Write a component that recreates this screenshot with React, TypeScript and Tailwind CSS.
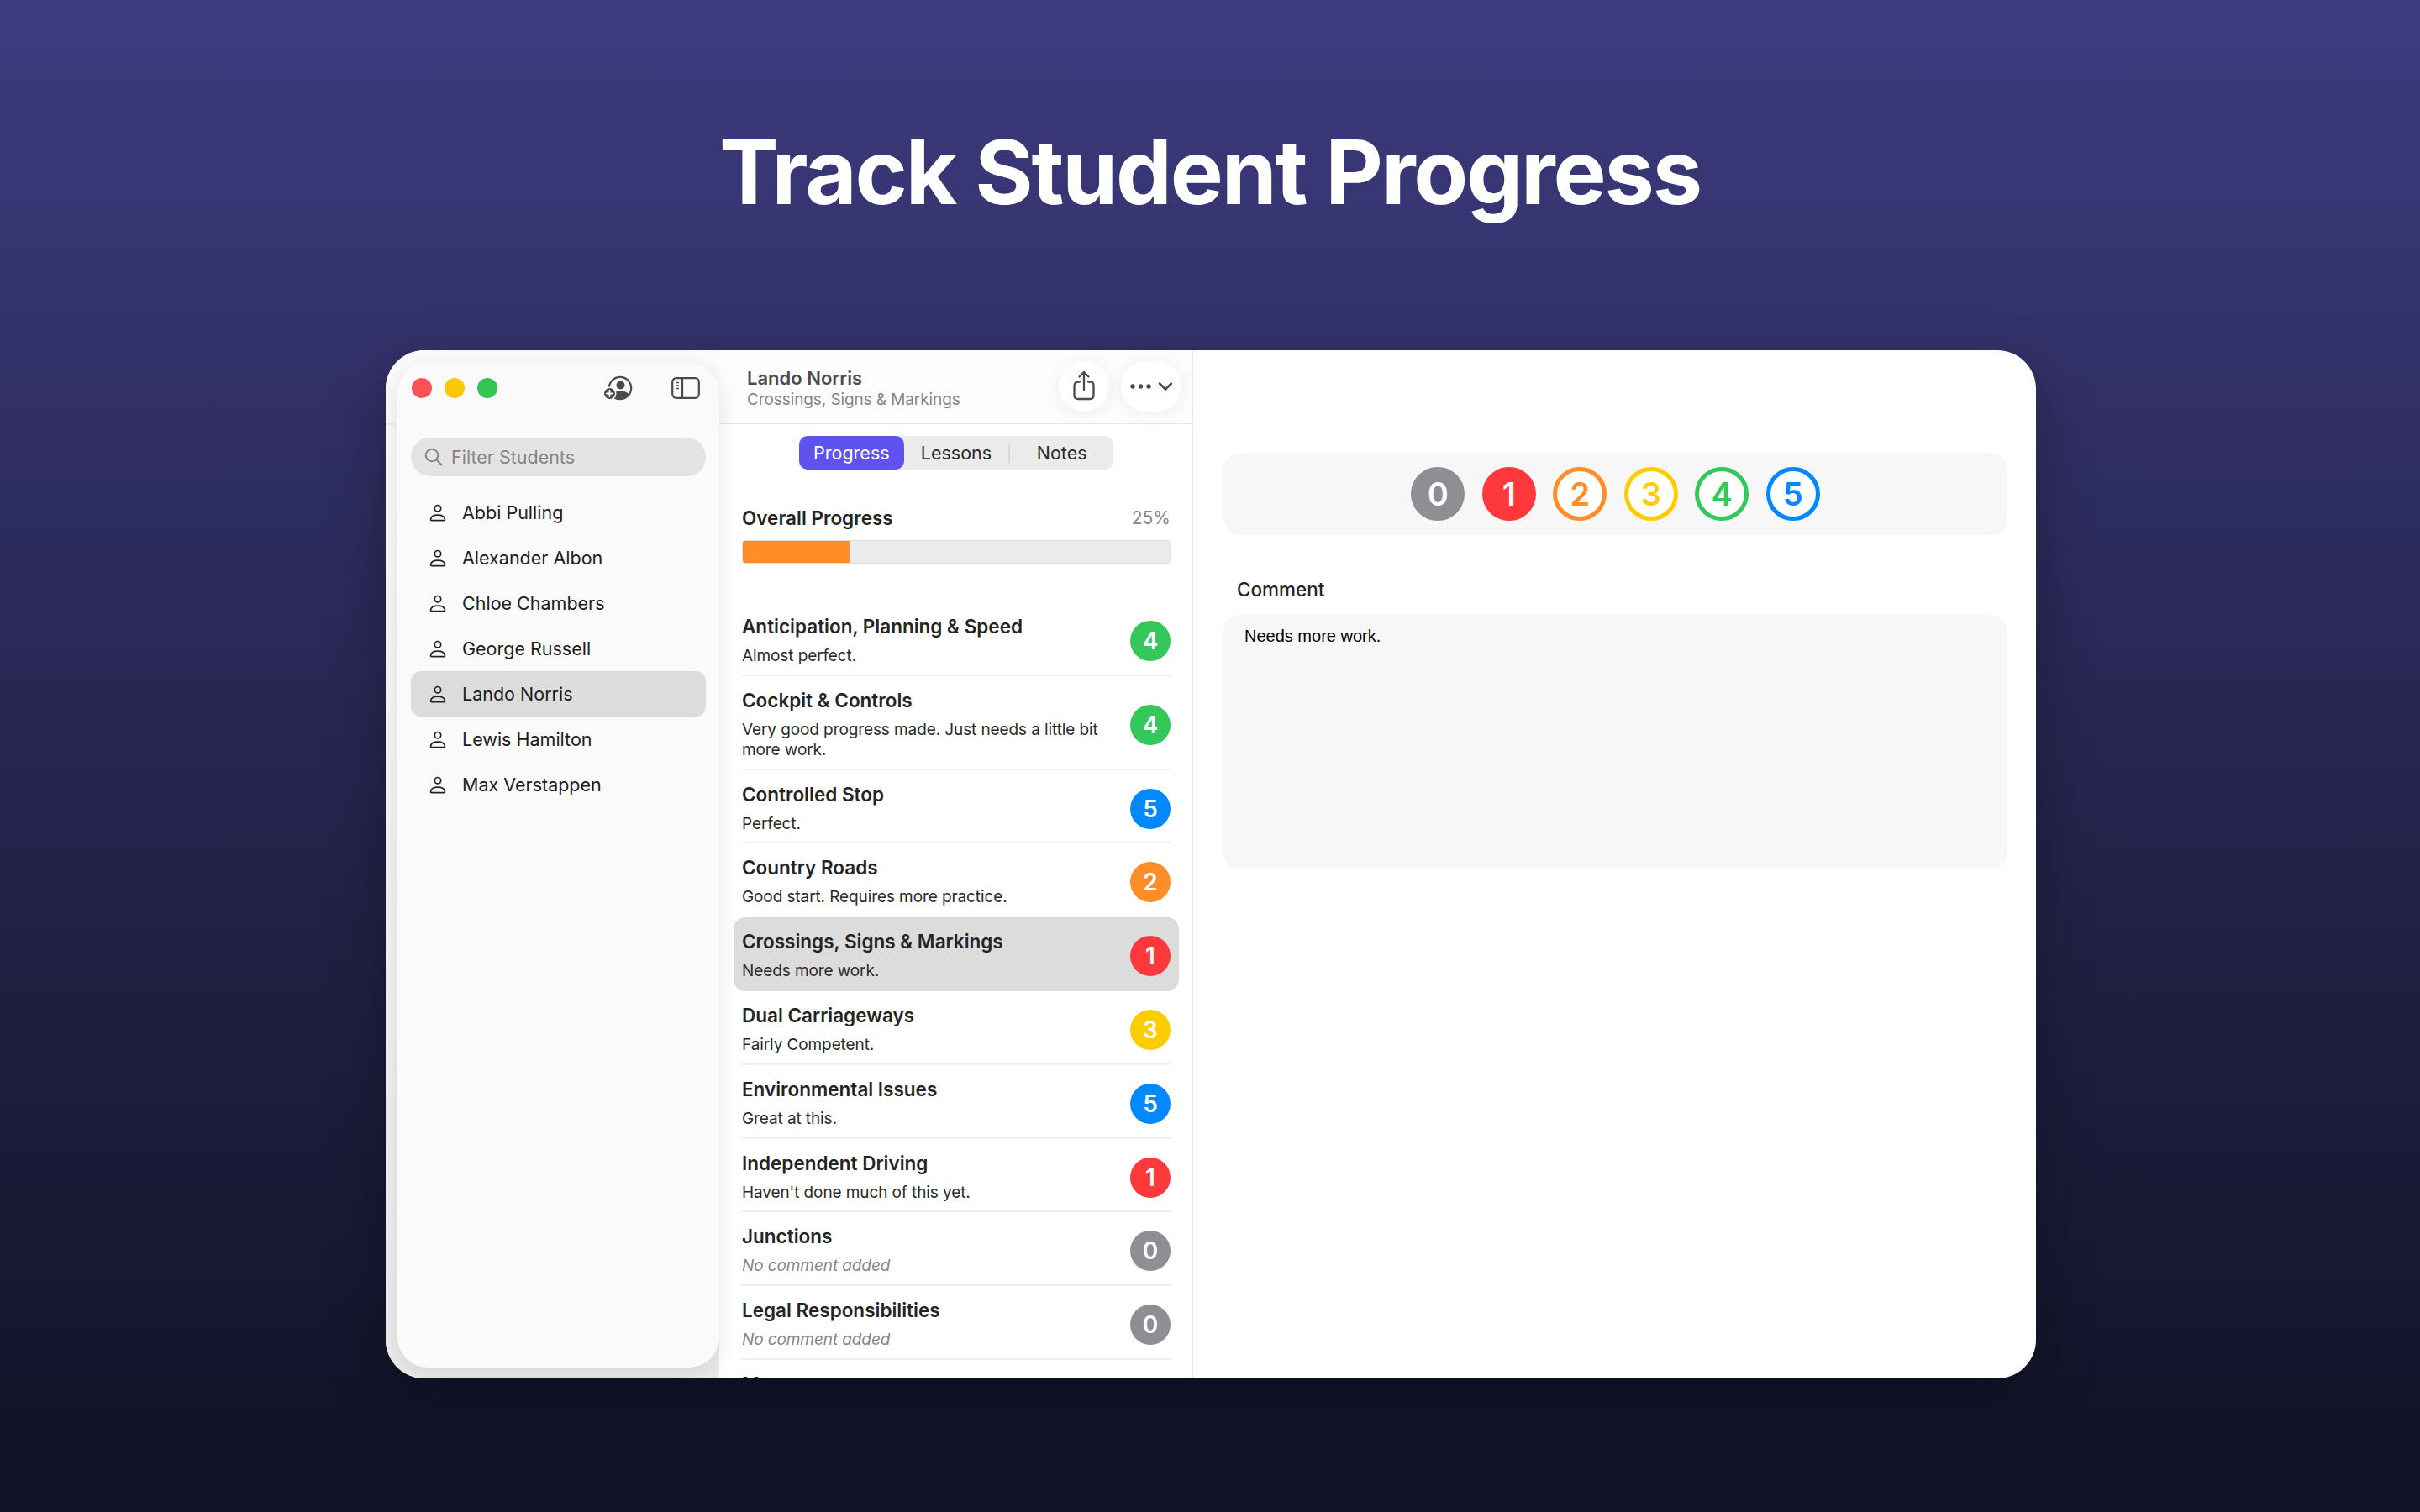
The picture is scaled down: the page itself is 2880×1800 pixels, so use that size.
import React from "react";

type Lesson = { title: string; note: string; score: number; empty?: boolean };

const students = [
    "Abbi Pulling",
    "Alexander Albon",
    "Chloe Chambers",
    "George Russell",
    "Lando Norris",
    "Lewis Hamilton",
    "Max Verstappen",
];

const lessons: Lesson[] = [
    { title: "Anticipation, Planning & Speed", note: "Almost perfect.", score: 4 },
    { title: "Cockpit & Controls", note: "Very good progress made. Just needs a little bit more work.", score: 4 },
    { title: "Controlled Stop", note: "Perfect.", score: 5 },
    { title: "Country Roads", note: "Good start. Requires more practice.", score: 2 },
    { title: "Crossings, Signs & Markings", note: "Needs more work.", score: 1 },
    { title: "Dual Carriageways", note: "Fairly Competent.", score: 3 },
    { title: "Environmental Issues", note: "Great at this.", score: 5 },
    { title: "Independent Driving", note: "Haven't done much of this yet.", score: 1 },
    { title: "Junctions", note: "No comment added", score: 0, empty: true },
    { title: "Legal Responsibilities", note: "No comment added", score: 0, empty: true },
    { title: "Manoeuvres", note: "No comment added", score: 0, empty: true },
];

const selectedLesson = 4;

const badgeBg = ["bg-[#8e8e93]", "bg-[#ff383c]", "bg-[#ff8d28]", "bg-[#ffcc00]", "bg-[#34c759]", "bg-[#0088ff]"];
const ringClass = [
    "bg-[#8e8e93] border-[#8e8e93] text-white",
    "bg-[#ff383c] border-[#ff383c] text-white",
    "bg-white border-[#ff8d28] text-[#ff8d28]",
    "bg-white border-[#ffcc00] text-[#ffcc00]",
    "bg-white border-[#34c759] text-[#34c759]",
    "bg-white border-[#0088ff] text-[#0088ff]",
];

function PersonIcon() {
    return (
        <svg width="20" height="21" viewBox="0 0 20 21" fill="none" stroke="#222" strokeWidth="1.7">
            <circle cx="10" cy="5.2" r="3.7" />
            <path d="M2.6 19.6h14.8c.8 0 1.2-.5 1.1-1.2-.5-3.1-3.9-5.2-8.5-5.2s-8 2.1-8.5 5.2c-.1.7.3 1.2 1.1 1.2z" />
        </svg>
    );
}

function AddPersonIcon() {
    return (
        <svg width="35" height="30" viewBox="0 0 35 30" fill="none">
            <circle cx="20" cy="15" r="13.2" stroke="#4a4a4a" strokeWidth="2.2" />
            <circle cx="20.5" cy="11.5" r="5" fill="#4a4a4a" />
            <path d="M10 25c1.5-4.5 5.5-6.5 10.500-6.500S29.500 20.500 31 23c-2.500 3.500-6.500 6-11 6-3.500 0-7-1.500-10-4z" fill="#4a4a4a" />
            <circle cx="7.500" cy="21.500" r="8" fill="#fafafa" />
            <circle cx="7.500" cy="21.500" r="6.500" fill="#4a4a4a" />
            <path d="M7.500 18v7M4 21.500h7" stroke="#fff" strokeWidth="1.800" strokeLinecap="round" />
        </svg>
    );
}

function SidebarIcon() {
    return (
        <svg width="34" height="26" viewBox="0 0 34 26" fill="none" stroke="#4a4a4a">
            <rect x="1.200" y="1.200" width="31.600" height="23.600" rx="4.500" strokeWidth="2.200" />
            <path d="M13 1.500v23" strokeWidth="2.200" />
            <path d="M5 6.500h4M5 10h4M5 13.500h4" strokeWidth="1.700" />
        </svg>
    );
}

function ShareIcon() {
    return (
        <svg width="26" height="36" viewBox="0 0 26 36" fill="none" stroke="#4a4a4a" strokeWidth="2.300" strokeLinecap="round" strokeLinejoin="round">
            <path d="M8 13.500H6c-2.800 0-4.500 1.700-4.500 4.500v11.500c0 2.800 1.700 4.500 4.500 4.500h14c2.800 0 4.500-1.700 4.500-4.500V18c0-2.800-1.700-4.500-4.500-4.500h-2" />
            <path d="M13 23V2M7.500 7.500 13 2l5.500 5.500" />
        </svg>
    );
}

function MoreIcon() {
    return (
        <svg width="50" height="14" viewBox="0 0 50 14" fill="none">
            <circle cx="3" cy="7" r="2.700" fill="#4a4a4a" />
            <circle cx="12.500" cy="7" r="2.700" fill="#4a4a4a" />
            <circle cx="22" cy="7" r="2.700" fill="#4a4a4a" />
            <path d="M35 3.500l7 7 7-7" stroke="#4a4a4a" strokeWidth="2.500" strokeLinecap="round" strokeLinejoin="round" />
        </svg>
    );
}

function SearchIcon() {
    return (
        <svg width="22" height="22" viewBox="0 0 22 22" fill="none" stroke="#858585" strokeWidth="2" strokeLinecap="round">
            <circle cx="9" cy="9" r="7.300" />
            <path d="M14.500 14.500 20.500 20.500" />
        </svg>
    );
}

function Sidebar() {
    return (
        <div className="relative z-10 flex w-[397px] shrink-0 bg-gradient-to-b from-[#fbfbfb] via-[#f3f3f3] to-[#ebebeb] pb-[13px] pl-[14px] pt-[15px]">
            <div className="absolute left-0 top-[87px] h-[2px] w-[14px] bg-[#e6e6e6]" />
            <div className="flex w-[383px] flex-col rounded-[36px] bg-[#fafafa] px-[16px] shadow-[0_6px_26px_rgba(0,0,0,0.11)]">
                <div className="flex h-[58px] items-center pl-[1px] pr-[7px] pt-[2px]">
                    <div className="flex gap-[15px]">
                        <div className="h-[24px] w-[24px] rounded-full bg-[#ff5257]" />
                        <div className="h-[24px] w-[24px] rounded-full bg-[#ffc700]" />
                        <div className="h-[24px] w-[24px] rounded-full bg-[#33c453]" />
                    </div>
                    <div className="ml-auto flex items-center gap-[46px]">
                        <AddPersonIcon />
                        <SidebarIcon />
                    </div>
                </div>
                <div className="mt-[31px] flex h-[46px] items-center gap-[10px] rounded-full bg-[#e3e3e3] pl-[16px] text-[21.5px] text-[#858585]">
                    <SearchIcon />
                    <span>Filter Students</span>
                </div>
                <div className="mt-[16px] flex flex-col">
                    {students.map((name) => (
                        <div
                            key={name}
                            className={`flex h-[54px] items-center gap-[19px] rounded-[12px] pl-[22px] text-[21.5px] text-[#1c1c1c] ${name === "Lando Norris" ? "bg-[#dcdcdc]" : ""}`}
                        >
                            <PersonIcon />
                            <span>{name}</span>
                        </div>
                    ))}
                </div>
            </div>
        </div>
    );
}

function LessonRow({ lesson, index }: { lesson: Lesson; index: number }) {
    const selected = index === selectedLesson;
    const noLine = selected || index === selectedLesson - 1;
    return (
        <div className={selected ? "-mx-[10px] rounded-[14px] bg-[#dcdcdc] px-[10px]" : ""}>
            <div className={`flex items-center justify-between gap-[30px] border-b-2 pb-[9.8px] pt-[16px] ${noLine ? "border-transparent" : "border-[#efefef]"}`}>
                <div className="min-w-0">
                    <div className="h-[26px] text-[22.5px] font-semibold leading-[26px] text-[#242424]">{lesson.title}</div>
                    <div className={`mt-[10px] text-[19px] leading-[24px] tracking-[-0.1px] ${lesson.empty ? "italic text-[#858585]" : "text-[#2a2a2a]"}`}>
                        {lesson.note}
                    </div>
                </div>
                <div className={`flex h-[48px] w-[48px] shrink-0 items-center justify-center rounded-full text-[28px] font-semibold text-white ${badgeBg[lesson.score]}`}>
                    {lesson.score}
                </div>
            </div>
        </div>
    );
}

function LessonColumn() {
    return (
        <div className="flex w-[564px] shrink-0 flex-col overflow-hidden border-r-2 border-[#e6e6e6]">
            <div className="flex h-[88px] shrink-0 items-center border-b-2 border-[#e6e6e6] bg-[#fdfdfd] pl-[33px] pr-[12px]">
                <div className="pt-[5px]">
                    <div className="text-[22px] font-semibold leading-[27px] text-[#4b4b4b]">Lando Norris</div>
                    <div className="text-[19px] leading-[24px] tracking-[-0.1px] text-[#858585]">Crossings, Signs & Markings</div>
                </div>
                <div className="ml-auto flex items-center gap-[14px]">
                    <div className="flex h-[60px] w-[60px] items-center justify-center rounded-full bg-white pb-[3px] shadow-[0_2px_24px_rgba(0,0,0,0.07)]">
                        <ShareIcon />
                    </div>
                    <div className="flex h-[60px] w-[72px] items-center justify-center rounded-full bg-white shadow-[0_2px_24px_rgba(0,0,0,0.07)]">
                        <MoreIcon />
                    </div>
                </div>
            </div>

            <div className="ml-[95px] mt-[14px] grid h-[40px] w-[374px] shrink-0 grid-cols-3 items-center rounded-[10px] bg-[#ebebeb] text-center text-[21.5px] text-[#2a2a2a]">
                <div className="flex h-full items-center justify-center rounded-[10px] bg-[#5f52ee] text-white">Progress</div>
                <div className="flex h-full items-center justify-center">Lessons</div>
                <div className="flex h-[23px] items-center justify-center border-l-2 border-[#d8d8d8]">Notes</div>
            </div>

            <div className="pl-[27px] pr-[25px]">
                <div className="mt-[45px] flex h-[26px] items-center justify-between">
                    <span className="text-[22.5px] font-semibold text-[#242424]">Overall Progress</span>
                    <span className="text-[21px] text-[#858585]">25%</span>
                </div>
                <div className="mt-[13px] h-[28px] overflow-hidden rounded-[4px] border border-[#dedede] bg-[#ebebeb]">
                    <div className="h-full w-1/4 bg-[#ff8d28]" />
                </div>
                <div className="mt-[46px]">
                    {lessons.map((lesson, i) => (
                        <LessonRow key={lesson.title} lesson={lesson} index={i} />
                    ))}
                </div>
            </div>
        </div>
    );
}

function DetailPane() {
    return (
        <div className="flex-1 pl-[36px] pr-[34px] pt-[122px]">
            <div className="flex h-[98px] items-center justify-center gap-[20.5px] rounded-[20px] bg-[#f7f7f7]">
                {[0, 1, 2, 3, 4, 5].map((n) => (
                    <div
                        key={n}
                        className={`flex h-[64px] w-[64px] items-center justify-center rounded-full border-[5px] text-[38px] font-semibold ${ringClass[n]}`}
                    >
                        {n}
                    </div>
                ))}
            </div>
            <div className="ml-[16px] mt-[52px] h-[26px] text-[22.5px] font-medium leading-[26px] text-[#242424]">Comment</div>
            <div className="mt-[17px] h-[303px] rounded-[20px] bg-[#f7f7f7] pl-[25px] pt-[12px] font-['Liberation_Sans',sans-serif] text-[20px] leading-[26px] text-black">
                Needs more work.
            </div>
        </div>
    );
}

export default function App() {
    return (
        <div className="flex h-[1800px] w-[2880px] flex-col overflow-hidden bg-gradient-to-b from-[#3e3b80] to-[#101124] font-['Inter',sans-serif]">
            <h1 className="mt-[131px] h-[148px] text-center text-[106px] font-bold leading-[148px] tracking-[-0.02em] text-white">
                Track Student Progress
            </h1>
            <div className="ml-[459px] mt-[138px] flex h-[1224px] w-[1964px] overflow-hidden rounded-[46px] bg-white shadow-[0_24px_70px_rgba(0,0,0,0.3)]">
                <Sidebar />
                <LessonColumn />
                <DetailPane />
            </div>
        </div>
    );
}
